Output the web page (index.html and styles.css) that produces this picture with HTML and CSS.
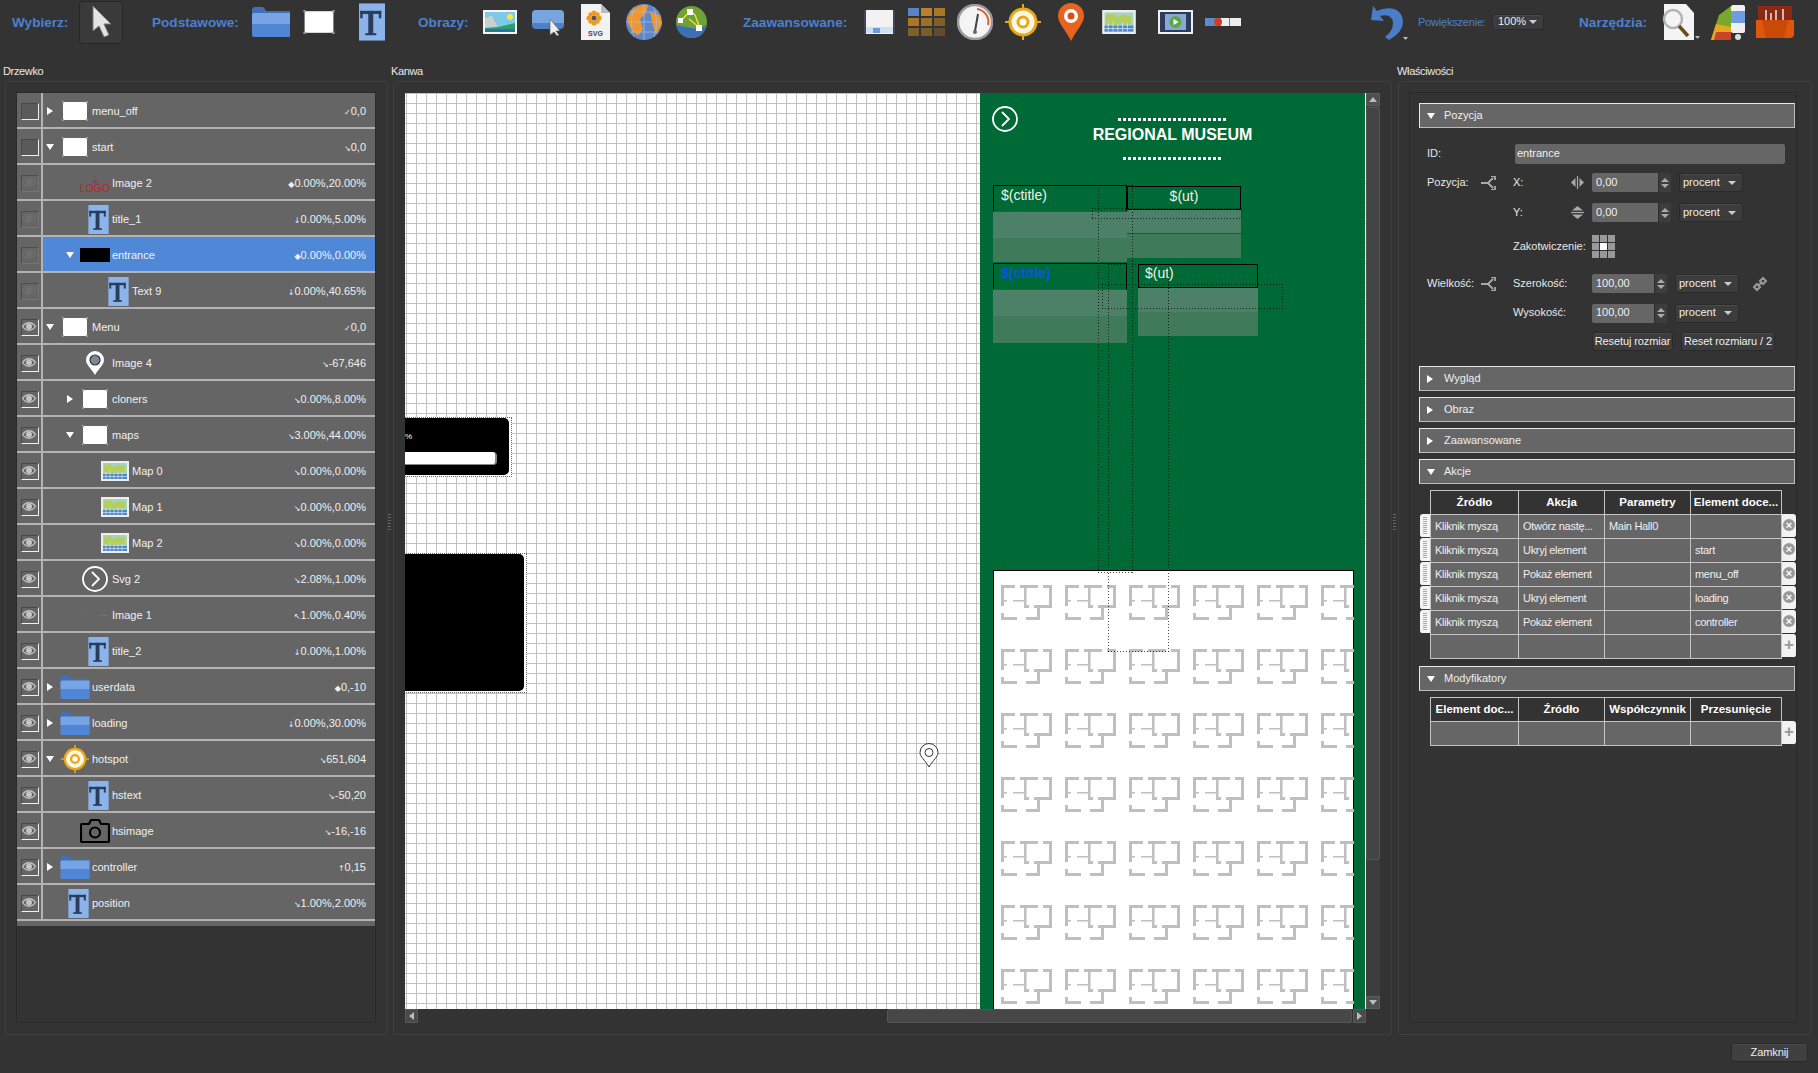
FILE: index.html
```html
<!DOCTYPE html>
<html lang="pl">
<head>
<meta charset="utf-8">
<title>Edytor</title>
<link rel="stylesheet" href="styles.css">
</head>
<body>
<svg class="defs" width="0" height="0">
  <symbol id="folder" viewBox="0 0 38 30">
    <path d="M0 3q0-3 3-3h7q2 0 3 2l1 2h24v8H0z" fill="#3f70b8"/>
    <path d="M0 8q0-2 2-2h36v11H0z" fill="#77a4e4"/>
    <path d="M0 17h38v13H2q-2 0-2-2z" fill="#4f86d6"/>
  </symbol>
  <symbol id="rect" viewBox="0 0 26 20">
    <rect x="1" y="1" width="24" height="18" fill="#fff"/>
    <g fill="#999"><rect width="2" height="2"/><rect x="24" width="2" height="2"/><rect y="18" width="2" height="2"/><rect x="24" y="18" width="2" height="2"/></g>
  </symbol>
  <symbol id="tee" viewBox="0 0 21 30">
    <rect width="21" height="30" fill="#8db4ea"/>
    <g fill="#2b3d5e"><rect x="1" y="6" width="17" height="2.5"/><rect x="1" y="6" width="2" height="6"/><rect x="16" y="6" width="2" height="6"/><rect x="7.5" y="6" width="4" height="19"/><rect x="5" y="24" width="9" height="1.7"/></g>
  </symbol>
  <symbol id="map" viewBox="0 0 28 20">
    <rect width="28" height="20" fill="#eee"/>
    <rect x="2" y="2" width="24" height="16" fill="#a6d4c0"/>
    <path d="M3 4l6-1 3 3 6-2 6 1v6l-5 1-4-1-4 2-8-2z" fill="#b4cf5e"/>
    <path d="M2 13h24v5H2z" fill="#4f86c8"/>
    <path d="M5 11v7M9 10v8M13 12v6M17 10v8M21 11v7M2 15.500h24" stroke="#cfe2f2" stroke-width=".7"/>
  </symbol>
  <symbol id="eye" viewBox="0 0 16 15">
    <path d="M1.5 7.5C5 2.5 11 2.5 14.5 7.5C11 12.500 5 12.500 1.500 7.500Z" fill="none" stroke="currentColor" stroke-width="1.300"/>
    <circle cx="8" cy="7.500" r="3" fill="currentColor"/>
  </symbol>
  <symbol id="hot" viewBox="0 0 36 36">
    <path d="M18 0v36M0 18h36" stroke="#e6a817" stroke-width="2"/>
    <circle cx="18" cy="18" r="13" fill="#fff6e0" stroke="#e6a817" stroke-width="3"/>
    <circle cx="18" cy="18" r="5" fill="#fff" stroke="#e6a817" stroke-width="3"/>
  </symbol>
  <symbol id="gcirc" viewBox="0 0 26 26">
    <circle cx="13" cy="13" r="12" fill="none" stroke="#fff" stroke-width="1.800"/>
    <path d="M10 6l7 7-7 7" fill="none" stroke="#fff" stroke-width="1.800"/>
  </symbol>
  <symbol id="share" viewBox="0 0 16 14">
    <path d="M0 7h7l5-5M7 7l5 5" fill="none" stroke="#aaa" stroke-width="1.800"/>
    <path d="M10 0h4v4M14 14h-4M14 14v-4" fill="none" stroke="#aaa" stroke-width="1.800"/>
  </symbol>
</svg>

<div class="app">
  <header class="toolbar">
    <span class="tl w58">Wybierz:</span>
    <div class="selbtn ml9">
      <svg width="22" height="34" viewBox="0 0 22 34"><path d="M3 1v25l6-5 5 11 5-2-5-11h7z" fill="#e4e4e4" stroke="#777"/></svg>
    </div>
    <span class="tl w87 ml29">Podstawowe:</span>
    <svg class="ml13" width="38" height="30"><use href="#folder"/></svg>
    <svg class="ml13" width="32" height="24"><use href="#rect"/></svg>
    <svg class="ml24" width="26" height="38"><use href="#tee"/></svg>
    <span class="tl w50 ml33">Obrazy:</span>
    <svg class="ml15" width="34" height="24" viewBox="0 0 34 24"><rect width="34" height="24" fill="#f4f4f4"/><rect x="2" y="2" width="30" height="20" fill="#7ec8e8"/><circle cx="27" cy="7" r="3" fill="#ffe14a"/><path d="M2 8l7-3 6 12 17-4v9H2z" fill="#2e9e6a"/><path d="M2 8l7-3 6 12-13 1z" fill="#c8d0d0"/><rect x="2" y="19" width="30" height="3" fill="#2f6fb0"/></svg>
    <svg class="ml15" width="32" height="27" viewBox="0 0 32 27"><rect y="1" width="32" height="17" rx="4" fill="#78a4e0"/><path d="M0 14h32v2q0 4-4 4H4q-4 0-4-4z" fill="#4f7fc4"/><path d="M18 10v16l4-3 3 4 2-1-3-4h4z" fill="#eee" stroke="#555" stroke-width=".6"/></svg>
    <svg class="ml17" width="29" height="36" viewBox="0 0 29 36"><path d="M0 0h20l9 9v27H0z" fill="#f2f2f2"/><path d="M20 0l9 9h-9z" fill="#bbb"/><g fill="#f09a1c"><circle cx="13" cy="9" r="2.600"/><circle cx="13" cy="19" r="2.600"/><circle cx="8" cy="14" r="2.600"/><circle cx="18" cy="14" r="2.600"/><circle cx="9.500" cy="10.500" r="2.200"/><circle cx="16.500" cy="10.500" r="2.200"/><circle cx="9.500" cy="17.500" r="2.200"/><circle cx="16.500" cy="17.500" r="2.200"/></g><circle cx="13" cy="14" r="2.500" fill="#555"/><text x="14.500" y="32" class="svgt">SVG</text></svg>
    <svg class="ml16" width="36" height="36" viewBox="0 0 36 36"><ellipse cx="18" cy="18" rx="18" ry="18" fill="#5f88c8"/><path d="M6 6q8-6 16-5l-2 8-6 6 3 10-5 7Q2 24 1 14zM24 8l10 3 2 9-6 10-3-8z" fill="#f0962a"/><path d="M0 18h36M18 0v36M4 8h28M4 28h28M8 3q-5 15 0 30M28 3q5 15 0 30" stroke="#a8c0e4" stroke-width=".7" fill="none"/></svg>
    <svg class="ml14" width="31" height="32" viewBox="0 0 31 32"><ellipse cx="15.500" cy="16" rx="15.500" ry="16" fill="#6ea234"/><path d="M0 19l10 2 12 2 8-4q-2 13-14 13Q3 32 0 19z" fill="#3e6fb4"/><path d="M4 16l10-11 5 4 5 13-11-9" stroke="#f6e23a" stroke-width="1.300" fill="none"/><g fill="#fff"><rect x="11" y="3" width="6" height="6"/><rect x="2" y="12" width="5" height="5"/><rect x="20" y="19" width="6" height="6"/></g></svg>
    <span class="tl w105 ml36">Zaawansowane:</span>
    <svg class="ml16" width="31" height="24" viewBox="0 0 31 24"><rect width="31" height="24" fill="#f2f2f2"/><rect x="1" y="17" width="29" height="6" fill="#cfe0f4"/><rect x="9" y="18" width="7" height="5" fill="#6c9ad8"/><rect y="0" width="2" height="24" fill="#445"/><rect x="29" y="0" width="2" height="24" fill="#445"/></svg>
    <svg class="ml13" width="37" height="28" viewBox="0 0 37 28">
      <rect x="0" width="11" height="8" fill="#5b82c4"/><rect x="13" width="11" height="8" fill="#b8812a"/><rect x="26" width="11" height="8" fill="#a87826"/>
      <rect y="10" width="11" height="8" fill="#a87826"/><rect x="13" y="10" width="11" height="8" fill="#9c7028"/><rect x="26" y="10" width="11" height="8" fill="#80602a"/>
      <rect y="20" width="11" height="8" fill="#80602a"/><rect x="13" y="20" width="11" height="8" fill="#7a5c2a"/><rect x="26" y="20" width="11" height="8" fill="#5f4c2c"/></svg>
    <svg class="ml12" width="36" height="36" viewBox="0 0 36 36"><circle cx="18" cy="18" r="17" fill="#f4f4f4" stroke="#9a9aa4" stroke-width="2.500"/><path d="M20 5a13 13 0 0 1 11 16" fill="none" stroke="#d8622a" stroke-width="2"/><path d="M21 10l-3 17" stroke="#444" stroke-width="2"/><circle cx="18" cy="28" r="2" fill="#666"/></svg>
    <svg class="ml12" width="36" height="36"><use href="#hot"/></svg>
    <svg class="ml17" width="26" height="38" viewBox="0 0 26 38"><path d="M13 38C7 26 0 20 0 13a13 13 0 0 1 26 0c0 7-7 13-13 25z" fill="#e8641e"/><circle cx="13" cy="13" r="7" fill="#fff"/><circle cx="13" cy="13" r="3.500" fill="#d6501a"/></svg>
    <svg class="ml17" width="36" height="24"><use href="#map"/></svg>
    <svg class="ml21" width="35" height="24" viewBox="0 0 35 24"><rect width="35" height="24" fill="#f0f0f0"/><rect x="2" y="2" width="31" height="20" fill="#2d3c5c"/><rect x="7" y="4" width="21" height="16" fill="#8aa8d0"/><circle cx="17.500" cy="12" r="6" fill="#5ca84a"/><path d="M15.500 9v6l5-3z" fill="#fff"/></svg>
    <svg class="ml12" width="36" height="8" viewBox="0 0 36 8"><rect width="16" height="8" fill="#5c8ccc"/><rect x="16" width="20" height="8" fill="#eee"/><rect x="24" width="1" height="8" fill="#777"/><circle cx="13" cy="4" r="4" fill="#d83a22"/></svg>
    <svg class="ml129" width="38" height="38" viewBox="0 0 38 38"><path d="M3 3L1 17l13 1-4-5q12-3 13 7 0 8-8 14l4 3q14-8 14-18C33 6 20 2 7 8z" fill="#4a7cc7"/><path d="M33 34h5l-2.500 3z" fill="#bbb"/></svg>
    <span class="pl ml10">Powiększenie:</span>
    <div class="zoomsel ml6">100%<i class="car"></i></div>
    <span class="tl w69 ml35">Narzędzia:</span>
    <svg class="ml12" width="40" height="36" viewBox="0 0 40 36"><path d="M4 0h22l8 9v27H4z" fill="#f4f4f4"/><circle cx="13" cy="15" r="9" fill="none" stroke="#b4b4b4" stroke-width="2.500"/><path d="M19 22l9 10" stroke="#6e4a1a" stroke-width="3.500"/><path d="M35 32h5l-2.500 3z" fill="#bbb"/></svg>
    <svg class="ml11" width="34" height="35" viewBox="0 0 34 35"><path d="M0 35L8 10l12-9v34z" fill="#7aa82c"/><path d="M0 35l5-16 15 3v13z" fill="#e6a81c"/><path d="M3 35l2-8h15v8z" fill="#c8442a"/><rect x="20" y="0" width="14" height="28" rx="2" fill="#f0f0f0"/><rect x="20" y="6" width="14" height="12" fill="#6e9ce0"/><circle cx="27" cy="32" r="3" fill="#ddd"/></svg>
    <svg class="ml11" width="38" height="32" viewBox="0 0 38 32"><rect x="2" y="0" width="34" height="16" fill="#8a2a12"/><path d="M10 4v10M15 7v7M20 4v10M27 3v11" stroke="#ddd" stroke-width="1.600"/><path d="M0 14h38v14q0 4-4 4H0z" fill="#e0560c"/><path d="M6 14l4 18h18l4-18" fill="#c94a06"/></svg>
  </header>

  <main class="panels">
    <section class="col c1">
      <div class="coll">Drzewko</div>
      <div class="panel tp">
        <div class="tree">
          <div class="row"><span class="vis blank"></span><div class="cell"><i class="tw r"></i><span class="ic"><svg width="26" height="20"><use href="#rect"/></svg></span><span class="nm">menu_off</span><span class="val"><i>✓</i>0,0</span></div></div>
          <div class="row"><span class="vis blank"></span><div class="cell"><i class="tw d"></i><span class="ic"><svg width="26" height="20"><use href="#rect"/></svg></span><span class="nm">start</span><span class="val"><i>↘</i>0,0</span></div></div>
          <div class="row"><span class="vis off"><svg width="16" height="15"><use href="#eye"/></svg></span><div class="cell l1"><i class="tw"></i><span class="ic"><svg width="30" height="24" viewBox="0 0 30 24"><path d="M15 2l3 3-3 3-3-3z" fill="#7a5a4a"/><path d="M15 8l3 3-3 2-3-2z" fill="#557"/><text x="15" y="21" class="logo">LOGO</text></svg></span><span class="nm">Image 2</span><span class="val"><i>◆</i>0.00%,20.00%</span></div></div>
          <div class="row"><span class="vis off"><svg width="16" height="15"><use href="#eye"/></svg></span><div class="cell l1"><i class="tw"></i><span class="ic"><svg class="tshift" width="21" height="29"><use href="#tee"/></svg></span><span class="nm">title_1</span><span class="val"><i>↓</i>0.00%,5.00%</span></div></div>
          <div class="row active"><span class="vis off"><svg width="16" height="15"><use href="#eye"/></svg></span><div class="cell l1"><i class="tw d"></i><span class="ic"><span class="blackic"></span></span><span class="nm">entrance</span><span class="val"><i>◆</i>0.00%,0.00%</span></div></div>
          <div class="row"><span class="vis off"><svg width="16" height="15"><use href="#eye"/></svg></span><div class="cell l2"><i class="tw"></i><span class="ic"><svg class="tshift" width="21" height="29"><use href="#tee"/></svg></span><span class="nm">Text 9</span><span class="val"><i>↓</i>0.00%,40.65%</span></div></div>
          <div class="row"><span class="vis"><svg width="16" height="15"><use href="#eye"/></svg></span><div class="cell"><i class="tw d"></i><span class="ic"><svg width="26" height="20"><use href="#rect"/></svg></span><span class="nm">Menu</span><span class="val"><i>✓</i>0,0</span></div></div>
          <div class="row"><span class="vis"><svg width="16" height="15"><use href="#eye"/></svg></span><div class="cell l1"><i class="tw"></i><span class="ic"><svg width="18" height="24" viewBox="0 0 18 24"><path d="M9 24C5 17 0 14 0 9a9 9 0 0 1 18 0c0 5-5 8-9 15z" fill="#fff"/><circle cx="9" cy="9" r="5" fill="#7a8a98" stroke="#333" stroke-width="1.200"/></svg></span><span class="nm">Image 4</span><span class="val"><i>↘</i>-67,646</span></div></div>
          <div class="row"><span class="vis"><svg width="16" height="15"><use href="#eye"/></svg></span><div class="cell l1"><i class="tw r"></i><span class="ic"><svg width="26" height="20"><use href="#rect"/></svg></span><span class="nm">cloners</span><span class="val"><i>↘</i>0.00%,8.00%</span></div></div>
          <div class="row"><span class="vis"><svg width="16" height="15"><use href="#eye"/></svg></span><div class="cell l1"><i class="tw d"></i><span class="ic"><svg width="26" height="20"><use href="#rect"/></svg></span><span class="nm">maps</span><span class="val"><i>↘</i>3.00%,44.00%</span></div></div>
          <div class="row"><span class="vis"><svg width="16" height="15"><use href="#eye"/></svg></span><div class="cell l2"><i class="tw"></i><span class="ic"><svg width="28" height="20"><use href="#map"/></svg></span><span class="nm">Map 0</span><span class="val"><i>↘</i>0.00%,0.00%</span></div></div>
          <div class="row"><span class="vis"><svg width="16" height="15"><use href="#eye"/></svg></span><div class="cell l2"><i class="tw"></i><span class="ic"><svg width="28" height="20"><use href="#map"/></svg></span><span class="nm">Map 1</span><span class="val"><i>↘</i>0.00%,0.00%</span></div></div>
          <div class="row"><span class="vis"><svg width="16" height="15"><use href="#eye"/></svg></span><div class="cell l2"><i class="tw"></i><span class="ic"><svg width="28" height="20"><use href="#map"/></svg></span><span class="nm">Map 2</span><span class="val"><i>↘</i>0.00%,0.00%</span></div></div>
          <div class="row"><span class="vis"><svg width="16" height="15"><use href="#eye"/></svg></span><div class="cell l1"><i class="tw"></i><span class="ic"><svg width="26" height="26"><use href="#gcirc"/></svg></span><span class="nm">Svg 2</span><span class="val"><i>↘</i>2.08%,1.00%</span></div></div>
          <div class="row"><span class="vis"><svg width="16" height="15"><use href="#eye"/></svg></span><div class="cell l1"><i class="tw"></i><span class="ic"><span class="thinline"></span></span><span class="nm">Image 1</span><span class="val"><i>↖</i>1.00%,0.40%</span></div></div>
          <div class="row"><span class="vis"><svg width="16" height="15"><use href="#eye"/></svg></span><div class="cell l1"><i class="tw"></i><span class="ic"><svg class="tshift" width="21" height="29"><use href="#tee"/></svg></span><span class="nm">title_2</span><span class="val"><i>↓</i>0.00%,1.00%</span></div></div>
          <div class="row"><span class="vis"><svg width="16" height="15"><use href="#eye"/></svg></span><div class="cell"><i class="tw r"></i><span class="ic"><svg width="30" height="23"><use href="#folder"/></svg></span><span class="nm">userdata</span><span class="val"><i>◆</i>0,-10</span></div></div>
          <div class="row"><span class="vis"><svg width="16" height="15"><use href="#eye"/></svg></span><div class="cell"><i class="tw r"></i><span class="ic"><svg width="30" height="23"><use href="#folder"/></svg></span><span class="nm">loading</span><span class="val"><i>↓</i>0.00%,30.00%</span></div></div>
          <div class="row"><span class="vis"><svg width="16" height="15"><use href="#eye"/></svg></span><div class="cell"><i class="tw d"></i><span class="ic"><svg width="28" height="28"><use href="#hot"/></svg></span><span class="nm">hotspot</span><span class="val"><i>↘</i>651,604</span></div></div>
          <div class="row"><span class="vis"><svg width="16" height="15"><use href="#eye"/></svg></span><div class="cell l1"><i class="tw"></i><span class="ic"><svg class="tshift" width="21" height="29"><use href="#tee"/></svg></span><span class="nm">hstext</span><span class="val"><i>↘</i>-50,20</span></div></div>
          <div class="row"><span class="vis"><svg width="16" height="15"><use href="#eye"/></svg></span><div class="cell l1"><i class="tw"></i><span class="ic"><svg width="30" height="26" viewBox="0 0 30 26"><path d="M2 6h7l2-4h8l2 4h7q1 0 1 1v16q0 1-1 1H2q-1 0-1-1V7q0-1 1-1z" fill="none" stroke="#000" stroke-width="2.200"/><circle cx="15" cy="14.500" r="5" fill="none" stroke="#000" stroke-width="2.200"/></svg></span><span class="nm">hsimage</span><span class="val"><i>↘</i>-16,-16</span></div></div>
          <div class="row"><span class="vis"><svg width="16" height="15"><use href="#eye"/></svg></span><div class="cell"><i class="tw r"></i><span class="ic"><svg width="30" height="23"><use href="#folder"/></svg></span><span class="nm">controller</span><span class="val"><i>↑</i>0,15</span></div></div>
          <div class="row"><span class="vis"><svg width="16" height="15"><use href="#eye"/></svg></span><div class="cell"><i class="tw"></i><span class="ic"><svg class="tshift" width="21" height="29"><use href="#tee"/></svg></span><span class="nm">position</span><span class="val"><i>↘</i>1.00%,2.00%</span></div></div>
          <div class="treeend"></div>
        </div>
      </div>
    </section>

    <div class="split sn"><span class="grip"></span></div>

    <section class="col c2">
      <div class="coll">Kanwa</div>
      <div class="panel cp">
        <div class="cgrid">
          <div class="viewport">
            <div class="blk b1"><div class="blkin"><span class="pct">%</span><span class="bar"></span></div></div>
            <div class="blk b2"><div class="blkin"></div></div>
            <svg class="cpin" width="20" height="25" viewBox="0 0 20 25"><path d="M10 24C6 17 1 14 1 9.500a9 9 0 0 1 18 0c0 4.500-5 7.500-9 14.500z" fill="#fff" stroke="#333"/><circle cx="10" cy="9.500" r="4" fill="#fff" stroke="#333"/></svg>
            <div class="green">
              <svg class="gc" width="26" height="26"><use href="#gcirc"/></svg>
              <div class="dots d1"></div>
              <div class="gtitle">REGIONAL MUSEUM</div>
              <div class="dots d2"></div>
              <div class="gt t1"><div class="gh h27"><span>$(ctitle)</span></div><div class="gr r1 h26"></div><div class="gr r2 h24"></div></div>
              <div class="gt t2"><div class="gh h24 ctr"><span>$(ut)</span></div><div class="gr r1 h23"></div><div class="gr r2 h25 sepg"></div></div>
              <div class="gt t3"><div class="gh h27 blue"><span>$(ctitle)</span></div><div class="gr r1 h26"></div><div class="gr r2 h27"></div></div>
              <div class="gt t4"><div class="gh h24"><span>$(ut)</span></div><div class="gr r1 h24"></div><div class="gr r2 h24"></div></div>
              <div class="plan">
                <svg class="plansvg" width="360" height="438">
                  <defs>
                    <pattern id="fp" x="7" y="14" width="64" height="64" patternUnits="userSpaceOnUse">
                      <g fill="#bfbfbf">
                        <rect width="14" height="3"/><rect width="3" height="15"/><rect y="15" width="6" height="1.500"/><rect y="16" width="3" height="5"/>
                        <rect x="12" y="15" width="12" height="1.500"/>
                        <rect x="23" width="2.500" height="23"/><rect x="19" width="18" height="3"/>
                        <rect x="42" width="9" height="3"/><rect x="48" width="3" height="23"/>
                        <rect x="33" y="20" width="18" height="3"/><rect x="25" y="20" width="3" height="3"/>
                        <rect x="36" y="20" width="3" height="15"/><rect x="25" y="32" width="14" height="3"/>
                        <rect y="32" width="16" height="3"/><rect y="28" width="3" height="7"/>
                      </g>
                    </pattern>
                  </defs>
                  <rect width="360" height="438" fill="url(#fp)"/>
                </svg>
              </div>
              <div class="gd g1"></div><div class="gd g2"></div><div class="gd g3"></div><div class="gd g4"></div>
            </div>
            <div class="wl w1"></div><div class="wl w2"></div>
          </div>
          <div class="vsb">
            <span class="sbtn"><i class="au"></i></span>
            <span class="vthumb"></span>
            <span class="vrest"></span>
            <span class="sbtn"><i class="ad"></i></span>
          </div>
          <div class="hsb">
            <span class="hbtn"><i class="al"></i></span>
            <span class="hrest"></span>
            <span class="hthumb"></span>
            <span class="hbtn"><i class="ar"></i></span>
          </div>
          <div class="corner"></div>
        </div>
      </div>
    </section>

    <div class="split"><span class="grip"></span></div>

    <section class="col c3">
      <div class="coll">Właściwości</div>
      <div class="panel rp">
        <div class="props">
          <div class="sech"><i class="tw d"></i>Pozycja</div>
          <div class="form">
            <div class="frow h20"><span class="flab w88">ID:</span><div class="txt w270">entrance</div></div>
            <div class="frow h19 mt9"><span class="flab w54">Pozycja:</span><svg class="w16" width="16" height="14"><use href="#share"/></svg><span class="flab w57 ml16">X:</span>
              <svg width="15" height="13" viewBox="0 0 15 13"><path d="M7.500 0v13" stroke="#aaa" stroke-width="1.200"/><path d="M5.500 2v9L1 6.500zM9.500 2v9L14 6.500z" fill="#aaa"/></svg>
              <div class="spin w79 ml7">0,00<span class="sp"><i class="su"></i><i class="sd"></i></span></div><div class="sel w64 ml8">procent<i class="car"></i></div></div>
            <div class="frow h19 mt11"><span class="flab w54">&nbsp;</span><span class="w16"></span><span class="flab w57 ml16">Y:</span>
              <svg width="15" height="13" viewBox="0 0 15 13"><path d="M1 6.500h13" stroke="#aaa" stroke-width="1.200"/><path d="M2 4.500h11L7.500 0zM2 8.500h11L7.500 13z" fill="#aaa"/></svg>
              <div class="spin w79 ml7">0,00<span class="sp"><i class="su"></i><i class="sd"></i></span></div><div class="sel w64 ml8">procent<i class="car"></i></div></div>
            <div class="frow h23 mt13"><span class="flab w86p"></span><span class="flab w79p">Zakotwiczenie:</span>
              <svg class="ml7" width="23" height="23" viewBox="0 0 23 23"><g fill="#999"><rect width="7" height="7"/><rect x="8" width="7" height="7"/><rect x="16" width="7" height="7"/><rect y="8" width="7" height="7"/><rect x="16" y="8" width="7" height="7"/><rect y="16" width="7" height="7"/><rect x="8" y="16" width="7" height="7"/><rect x="16" y="16" width="7" height="7"/></g><rect x="8" y="8" width="7" height="7" fill="#fff"/></svg></div>
            <div class="frow h19 mt16"><span class="flab w54">Wielkość:</span><svg class="w16" width="16" height="14"><use href="#share"/></svg><span class="flab w79p ml16">Szerokość:</span>
              <div class="spin w75 ml7b">100,00<span class="sp"><i class="su"></i><i class="sd"></i></span></div><div class="sel w64 ml8">procent<i class="car"></i></div>
              <svg class="ml13" width="16" height="16" viewBox="0 0 16 16"><path d="M2 11l3-3 3 3-3 3zM8 5l3-3 3 3-3 3zM6 10l4-4" fill="none" stroke="#999" stroke-width="2"/></svg></div>
            <div class="frow h20 mt10"><span class="flab w86p"></span><span class="flab w79p">Wysokość:</span>
              <div class="spin w75 ml7b">100,00<span class="sp"><i class="su"></i><i class="sd"></i></span></div><div class="sel w64 ml8">procent<i class="car"></i></div></div>
            <div class="frow h19 mt9"><span class="w165"></span><div class="btn w81">Resetuj rozmiar</div><div class="btn w94 ml8">Reset rozmiaru / 2</div></div>
          </div>
          <div class="sech"><i class="tw r"></i>Wygląd</div>
          <div class="sech mt6"><i class="tw r"></i>Obraz</div>
          <div class="sech mt6"><i class="tw r"></i>Zaawansowane</div>
          <div class="sech mt6"><i class="tw d"></i>Akcje</div>
          <div class="twrap">
            <div class="hcol"><span class="hd"></span><span class="hd"></span><span class="hd"></span><span class="hd"></span><span class="hd"></span></div>
            <table class="tb">
              <thead><tr><th class="c88">Źródło</th><th class="c86">Akcja</th><th class="c86">Parametry</th><th class="c90">Element doce...</th></tr></thead>
              <tbody>
                <tr><td>Kliknik myszą</td><td>Otwórz nastę...</td><td>Main Hall0</td><td></td></tr>
                <tr><td>Kliknik myszą</td><td>Ukryj element</td><td></td><td>start</td></tr>
                <tr><td>Kliknik myszą</td><td>Pokaż element</td><td></td><td>menu_off</td></tr>
                <tr><td>Kliknik myszą</td><td>Ukryj element</td><td></td><td>loading</td></tr>
                <tr><td>Kliknik myszą</td><td>Pokaż element</td><td></td><td>controller</td></tr>
                <tr><td></td><td></td><td></td><td></td></tr>
              </tbody>
            </table>
            <div class="acol"><span class="ab x"></span><span class="ab x"></span><span class="ab x"></span><span class="ab x"></span><span class="ab x"></span><span class="ab p"></span></div>
          </div>
          <div class="sech mt7"><i class="tw d"></i>Modyfikatory</div>
          <div class="twrap">
            <div class="hcol"></div>
            <table class="tb">
              <thead><tr><th class="c88">Element doc...</th><th class="c86">Źródło</th><th class="c86">Współczynnik</th><th class="c90">Przesunięcie</th></tr></thead>
              <tbody><tr><td></td><td></td><td></td><td></td></tr></tbody>
            </table>
            <div class="acol"><span class="ab p"></span></div>
          </div>
        </div>
      </div>
    </section>
  </main>

  <footer class="foot"><div class="btn close">Zamknij</div></footer>
</div>
</body>
</html>
```
FILE: styles.css
```css
* { box-sizing: border-box; }
html, body { margin: 0; padding: 0; }
body { width: 1818px; height: 1073px; overflow: hidden; background: #333; color: #eee; font: 11px/1.2 "Liberation Sans", Arial, sans-serif; }
i { font-style: normal; }
.defs { display: none; }
.app { display: flex; flex-direction: column; height: 1073px; }

/* toolbar */
.toolbar { height: 44px; display: flex; align-items: center; padding-left: 12px; flex: none; }
.toolbar svg { flex: none; display: block; }
.tl { color: #4c80d0; font-weight: bold; font-size: 13.600px; white-space: nowrap; flex: none; margin-top: 3px; }
.pl { color: #4c80d0; font-size: 11px; width: 68px; flex: none; white-space: nowrap; letter-spacing: -.2px; margin-top: 1px; }
.selbtn { width: 44px; height: 43px; border: 1px solid #262626; border-radius: 3px; background: #3a3a3a; display: flex; align-items: center; justify-content: center; flex: none; }
.zoomsel { width: 52px; height: 16px; background: #3c3c3c; border: 1px solid #2a2a2a; border-radius: 3px; display: flex; align-items: center; padding-left: 5px; flex: none; gap: 3px; box-shadow: inset 0 1px #4a4a4a; }
.car { display: inline-block; width: 0; height: 0; border: 4px solid transparent; border-top: 4px solid #ccc; border-bottom: 0; }

.w50 { width: 50px; } .w58 { width: 58px; } .w69 { width: 69px; } .w87 { width: 87px; } .w105 { width: 105px; }
.ml6 { margin-left: 6px; } .ml7 { margin-left: 7px; } .ml7b { margin-left: 7px; } .ml8 { margin-left: 8px; } .ml9 { margin-left: 9px; } .ml10 { margin-left: 10px; }
.ml11 { margin-left: 11px; } .ml12 { margin-left: 12px; } .ml13 { margin-left: 13px; } .ml14 { margin-left: 14px; } .ml15 { margin-left: 15px; }
.ml16 { margin-left: 16px; } .ml17 { margin-left: 17px; } .ml21 { margin-left: 21px; } .ml24 { margin-left: 24px; } .ml29 { margin-left: 29px; }
.ml33 { margin-left: 33px; } .ml35 { margin-left: 35px; } .ml36 { margin-left: 36px; } .ml129 { margin-left: 129px; }
.svgt { font: bold 7px "Liberation Sans", sans-serif; fill: #444; text-anchor: middle; }
.logo { font: 10.500px "Liberation Sans", sans-serif; fill: #c8202a; text-anchor: middle; }

/* columns */
.panels { height: 991px; display: flex; flex: none; padding-left: 3px; }
.col { display: flex; flex-direction: column; flex: none; }
.c1 { width: 385px; } .c2 { width: 1001px; } .c3 { width: 415px; }
.coll { height: 37px; padding-top: 21px; line-height: 12px; color: #e8e8e8; letter-spacing: -.35px; }
.panel { flex: 1; border: 1px solid #3e3e3e; border-radius: 3px; }
.c1 .panel { margin-left: 2px; } .c2 .panel { margin-left: 2px; } .c3 .panel { margin-left: 1px; }
.split { width: 5px; flex: none; display: flex; align-items: center; padding-top: 37px; justify-content: center; }
.split.sn { width: 3px; }
.grip { width: 3px; height: 17px; flex: none; background: repeating-linear-gradient(#666 0 1px, transparent 1px 3px); margin-top: -72px; }

/* tree */
.tp { padding: 10px 11px 11px 10px; }
.tree { height: 100%; background: #333; border: 1px solid #2a2a2a; }
.row { height: 36px; display: flex; background: #656565; border-bottom: 2px solid #b3b3b3; }
.row .vis { width: 26px; flex: none; border-right: 2px solid #b3b3b3; margin-bottom: -2px; }
.vis { position: relative; color: #c4c4c4; }
.row .vis::before { content: ""; position: absolute; left: 4px; top: 10px; width: 16px; height: 15px; border: 1px solid; border-color: #4a4a4a #f0f0f0 #f0f0f0 #4a4a4a; }
.row .vis.off::before { border-color: #4d4d4d #747474 #747474 #4d4d4d; }
.vis svg { position: absolute; left: 4px; top: 10px; }
.vis.off { color: #6f6f6f; }
.row .vis.blank::before { background: #5a5a5a; }
.cell { flex: 1; display: flex; align-items: center; padding: 2px 9px 0 4px; min-width: 0; }
.l1 { padding-left: 24px; } .l2 { padding-left: 44px; }
.tw { display: block; flex: none; width: 14px; height: 0; }
.tw.r, .tw.d { position: relative; }
.tw.r::after { content: ""; position: absolute; left: 0; top: -4px; border-left: 6px solid #fff; border-top: 4.500px solid transparent; border-bottom: 4.500px solid transparent; }
.tw.d::after { content: ""; position: absolute; left: -1px; top: -3px; border-top: 6px solid #fff; border-left: 4.500px solid transparent; border-right: 4.500px solid transparent; }
.ic { width: 28px; flex: none; display: flex; justify-content: center; align-items: center; height: 32px; }
.ic svg { flex: none; display: block; }
.tshift { margin-left: 6px; }
.nm { margin: 2px 0 0 3px; white-space: nowrap; color: #f0f0f0; }
.val { margin: 2px 0 0 auto; white-space: nowrap; color: #f0f0f0; }
.val i { font: 8px "DejaVu Sans", sans-serif; margin-right: 0; }
.row.active .cell { background: #5088d8; }
.blackic { display: block; width: 30px; height: 14px; background: #000; flex: none; }
.thinline { display: block; width: 24px; height: 1px; flex: none; background: linear-gradient(90deg, #6a6a6a, #746058, #5f6e68, #777); }
.treeend { height: 5px; background: #656565; }

/* canvas */
.cp { padding: 11px 11px 11px 11px; }
.cgrid { display: grid; grid-template-columns: 961px 14px; grid-template-rows: 916px 14px; }
.viewport { position: relative; overflow: hidden; background-color: #fff; background-image: linear-gradient(#c2c2c2 1px, transparent 1px), linear-gradient(90deg, #c2c2c2 1px, transparent 1px); background-size: 10px 10px; background-position: 1px 0; }
.blk { position: absolute; left: -2px; background: #fff; border: 1px dotted #666; border-left: 0; padding: 0 2px 1px 0; }
.b1 { top: 324px; width: 109px; height: 60px; }
.b2 { top: 460px; width: 124px; height: 140px; }
.blkin { position: relative; height: 100%; background: #000; border-radius: 0 5px 5px 0; }
.pct { position: absolute; left: 2px; top: 14px; color: #fff; font-size: 8px; }
.bar { position: absolute; left: 0; top: 34px; width: 94px; height: 13px; background: #fff; border-right: 2px solid #888; border-bottom: 1px solid #888; border-radius: 0 4px 4px 0; }
.cpin { position: absolute; left: 514px; top: 650px; }
.green { position: absolute; left: 575px; top: 0; width: 385px; height: 916px; background: #006a36; }
.gc { position: absolute; left: 12px; top: 13px; }
.dots { position: absolute; height: 3px; background: repeating-linear-gradient(90deg, #fff 0 3px, transparent 3px 5px); }
.d1 { left: 138px; top: 25px; width: 108px; }
.d2 { left: 143px; top: 64px; width: 98px; }
.gtitle { position: absolute; left: 0; right: 0; top: 33px; text-align: center; font-weight: bold; font-size: 16px; line-height: 18px; color: #fff; }
.gt { position: absolute; }
.t1 { left: 13px; top: 92px; width: 134px; } .t2 { left: 147px; top: 93px; width: 114px; }
.t3 { left: 13px; top: 170px; width: 134px; } .t4 { left: 158px; top: 171px; width: 120px; }
.gh { border: 1px solid #000; border-bottom: 1px solid #4a4a4a; padding: 1px 7px 0; font-size: 14px; color: #eef4e6; line-height: 17px; }
.t2 .gh { border-bottom-color: #000; padding-top: 1px; }
.gh.ctr { text-align: center; }
.t4 .gh { border-bottom-color: #000; padding: 0 0 0 6px; }
.gh.blue { color: #0a56e0; font-weight: bold; }
.gr.r1 { background: #4d8069; } .gr.r2 { background: #3f7b5a; }
.sepg { border-top: 1px solid #006a36; }
.h23 { height: 23px; } .h24 { height: 24px; } .h25 { height: 25px; } .h26 { height: 26px; } .h27 { height: 27px; }
.plan { position: absolute; left: 13px; top: 477px; width: 361px; height: 439px; background: #fff; border: 1px solid #000; border-bottom: 0; }
.plansvg { display: block; }
.gd { position: absolute; --dc: rgba(0,0,0,.7);
  background:
    linear-gradient(90deg, var(--dc) 1px, transparent 1px) 0 0 / 3px 1px repeat-x,
    linear-gradient(90deg, var(--dc) 1px, transparent 1px) 0 100% / 3px 1px repeat-x,
    linear-gradient(var(--dc) 1px, transparent 1px) 0 0 / 1px 3px repeat-y,
    linear-gradient(var(--dc) 1px, transparent 1px) 100% 0 / 1px 3px repeat-y; }
.g1 { left: 118px; top: 92px; width: 35px; height: 388px; }
.g2 { left: 128px; top: 171px; width: 61px; height: 388px; }
.g3 { left: 112px; top: 115px; width: 150px; height: 11px; }
.g4 { left: 122px; top: 191px; width: 181px; height: 25px; }
.wl { position: absolute; left: 960px; width: 1px; background: #fff; }
.w1 { top: 0; height: 87px; } .w2 { top: 460px; height: 456px; }
.vsb { background: #3d3d3d; display: flex; flex-direction: column; }
.sbtn { height: 13px; flex: none; background: #4f4f4f; border: 1px solid #5c5c5c; display: flex; align-items: center; justify-content: center; }
.vthumb { height: 753px; flex: none; margin: 1px 0; background: #444; border: 1px solid #555; border-radius: 2px; }
.vrest { flex: 1; }
.au { border-bottom: 5px solid #bbb; border-left: 4px solid transparent; border-right: 4px solid transparent; }
.ad { border-top: 5px solid #bbb; border-left: 4px solid transparent; border-right: 4px solid transparent; }
.al { border-right: 5px solid #bbb; border-top: 4px solid transparent; border-bottom: 4px solid transparent; }
.ar { border-left: 5px solid #bbb; border-top: 4px solid transparent; border-bottom: 4px solid transparent; }
.hsb { background: #333; display: flex; }
.hbtn { width: 13px; flex: none; background: #4a4a4a; border: 1px solid #585858; display: flex; align-items: center; justify-content: center; }
.hrest { width: 468px; flex: none; }
.hthumb { flex: 1; background: #474747; border: 1px solid #555; border-radius: 2px; margin: 0 1px; }
.corner { background: #333; }

/* properties */
.rp { padding: 10px 14px 11px 10px; }
.props { height: 100%; border: 1px solid #2a2a2a; padding: 10px 1px 0 9px; }
.sech { height: 25px; display: flex; align-items: center; background: #666; border: 1px solid; border-color: #e8e8e8 #bbb #bbb #e8e8e8; color: #eee; padding-left: 7px; }
.sech .tw { width: 17px; }
.sech .tw.d::after { left: 0; }
.mt6 { margin-top: 6px; } .mt7 { margin-top: 7px; } .mt9 { margin-top: 9px; } .mt10 { margin-top: 10px; } .mt11 { margin-top: 11px; } .mt13 { margin-top: 13px; } .mt16 { margin-top: 16px; }
.form { padding: 16px 0 15px 8px; }
.frow { display: flex; align-items: center; }
.frow svg { flex: none; }
.h19 { height: 19px; } .h20 { height: 20px; }
.flab { flex: none; white-space: nowrap; color: #e8e8e8; }
.w54 { width: 54px; } .w57 { width: 57px; } .w64 { width: 64px; } .w75 { width: 75px; } .w79 { width: 79px; } .w81 { width: 81px; } .w88 { width: 88px; } .w94 { width: 94px; } .w270 { width: 270px; } .w16 { width: 16px; flex: none; } .w165 { width: 165px; flex: none; }
.w86p { width: 86px; } .w79p { width: 72px; }
.txt { height: 20px; background: #666; border-radius: 2px; display: flex; align-items: center; padding-left: 2px; color: #f0f0f0; }
.spin { height: 19px; background: #666; border-radius: 2px; display: flex; align-items: center; padding-left: 4px; position: relative; flex: none; color: #f0f0f0; }
.sp { position: absolute; right: 0; top: 0; bottom: 0; width: 13px; background: #3d3d3d; display: flex; flex-direction: column; align-items: center; justify-content: center; gap: 2px; border-left: 1px solid #2c2c2c; }
.su { border-bottom: 4px solid #aaa; border-left: 4px solid transparent; border-right: 4px solid transparent; }
.sd { border-top: 4px solid #aaa; border-left: 4px solid transparent; border-right: 4px solid transparent; }
.sel { height: 19px; background: #3c3c3c; border: 1px solid #2a2a2a; border-radius: 3px; display: flex; align-items: center; justify-content: space-between; padding: 0 6px 0 3px; flex: none; color: #eee; box-shadow: inset 0 1px #4a4a4a; }
.btn { height: 19px; background: #3c3c3c; border: 1px solid #2a2a2a; border-radius: 3px; display: flex; align-items: center; justify-content: center; flex: none; color: #eee; white-space: nowrap; font-size: 11px; letter-spacing: -.1px; box-shadow: inset 0 1px #4a4a4a; }
.twrap { display: flex; margin-top: 6px; }
.hcol { width: 11px; padding-top: 24px; padding-left: 1px; flex: none; display: flex; flex-direction: column; }
.hd { height: 24px; width: 10px; background: #f4f4f4; border-radius: 3px 0 0 3px; border-bottom: 1px solid #333; position: relative; }
.hd::after { content: ""; position: absolute; left: 3px; width: 4px; top: 3px; bottom: 3px; background: repeating-linear-gradient(#aaa 0 1px, transparent 1px 2px); }
.tb { border-collapse: collapse; table-layout: fixed; width: 351px; flex: none; }
.tb th, .tb td { border: 1px solid #c4c4c4; height: 24px; padding: 0 3px 0 4px; white-space: nowrap; overflow: hidden; }
.tb th { background: #333; color: #fff; font-weight: bold; font-size: 11.500px; text-align: center; padding: 0; }
.tb td { background: #666; color: #efefef; letter-spacing: -.3px; }
.c88 { width: 88px; } .c86 { width: 86px; } .c90 { width: 91px; }
.acol { width: 14px; padding-top: 24px; flex: none; display: flex; flex-direction: column; }
.ab { height: 24px; background: #f2f2f2; border-radius: 0 3px 3px 0; border-bottom: 1px solid #333; position: relative; }
.ab.x::before { content: "×"; position: absolute; left: 1px; top: 5px; width: 12px; height: 12px; border-radius: 50%; background: #999; color: #fff; font: bold 11px/12px "Liberation Sans", sans-serif; text-align: center; }
.ab.p::before { content: "+"; position: absolute; left: 0; right: 0; top: 2px; color: #999; font: bold 17px/18px "Liberation Sans", sans-serif; text-align: center; }

/* footer */
.foot { height: 38px; display: flex; justify-content: flex-end; padding: 8px 10px 0 0; flex: none; }
.close { width: 77px; background: #404040; }
```
